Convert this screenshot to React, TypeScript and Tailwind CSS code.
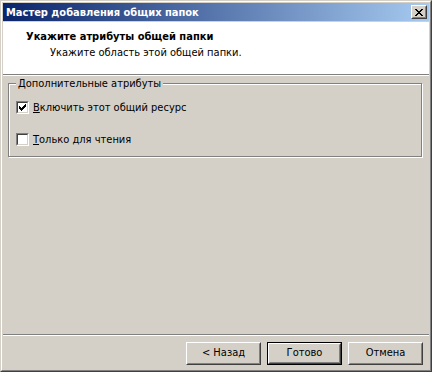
import React from "react";

const font = { fontFamily: '"DejaVu Sans Condensed", "Liberation Sans", Arial, sans-serif' };

function Checkbox({ checked }: { checked: boolean }) {
  return (
    <div className="w-[13px] h-[13px] shrink-0 border border-t-[#808080] border-l-[#808080] border-r-white border-b-white">
      <div className="w-full h-full border border-t-[#404040] border-l-[#404040] border-r-[#d4d0c8] border-b-[#d4d0c8] bg-white flex items-center justify-center">
        {checked && (
          <svg width="7" height="7" viewBox="0 0 7 7" shapeRendering="crispEdges">
            <path d="M0 2h1v3h-1zM1 3h1v3h-1zM2 4h1v3h-1zM3 3h1v3h-1zM4 2h1v3h-1zM5 1h1v3h-1zM6 0h1v3h-1z" fill="#000" />
          </svg>
        )}
      </div>
    </div>
  );
}

function Button({ label, def }: { label: string; def?: boolean }) {
  const inner = (
    <div className="h-full w-full border border-t-white border-l-white border-r-[#404040] border-b-[#404040]">
      <div className="h-full w-full border border-t-[#d4d0c8] border-l-[#d4d0c8] border-r-[#808080] border-b-[#808080] flex items-center justify-center text-[11px] text-black">
        {label}
      </div>
    </div>
  );
  return (
    <div className={"w-[75px] h-[23px] bg-[#d4d0c8] " + (def ? "border border-black" : "")}>
      {inner}
    </div>
  );
}

export default function App() {
  return (
    <div style={font} className="w-[432px] h-[372px] bg-[#d4d0c8] border border-t-[#d4d0c8] border-l-[#d4d0c8] border-r-[#404040] border-b-[#404040]">
      <div className="w-full h-full border border-t-white border-l-white border-r-[#808080] border-b-[#808080] p-[1px] flex flex-col">
        {/* Title bar */}
        <div className="h-[18px] shrink-0 flex items-center bg-[linear-gradient(to_right,#0a246a,#a6caf0)]">
          <span className="pl-[3px] text-[11px] font-bold text-white leading-none">Мастер добавления общих папок</span>
          <div className="ml-auto mr-[2px] w-[16px] h-[14px] bg-[#d4d0c8] border border-t-white border-l-white border-r-[#404040] border-b-[#404040]">
            <div className="w-full h-full border border-t-[#d4d0c8] border-l-[#d4d0c8] border-r-[#808080] border-b-[#808080] flex items-center justify-center">
              <svg width="8" height="7" viewBox="0 0 8 7" shapeRendering="crispEdges">
                <path d="M0 0h2v1h-2zM6 0h2v1h-2zM1 1h2v1h-2zM5 1h2v1h-2zM2 2h4v1h-4zM3 3h2v1h-2zM2 4h4v1h-4zM1 5h2v1h-2zM5 5h2v1h-2zM0 6h2v1h-2zM6 6h2v1h-2z" fill="#000" />
              </svg>
            </div>
          </div>
        </div>
        <div className="h-[1px] shrink-0" />
        {/* Client */}
        <div className="flex-1 flex flex-col">
          <div className="h-[52px] shrink-0 bg-white pl-[23px] pt-[8px] text-[11px] text-black">
            <div className="font-bold leading-[13px]">Укажите атрибуты общей папки</div>
            <div className="pl-[24px] leading-[13px] mt-[3px]">Укажите область этой общей папки.</div>
          </div>
          <div className="h-[1px] bg-[#808080] shrink-0" />
          <div className="h-[1px] bg-white shrink-0" />
          <div className="flex-1 pt-[7px] pl-[5px] pr-[6px]">
            <div className="relative h-[74px] border border-[#808080] shadow-[inset_1px_1px_0_#fff,1px_1px_0_#fff] mr-[1px] mb-[1px]">
              <span className="absolute left-[7px] -top-[7px] px-[2px] bg-[#d4d0c8] text-[11px] leading-[13px] text-black">
                Дополнительные атрибуты
              </span>
              <div className="pt-[17px] pl-[7px] flex flex-col gap-[19px] text-[11px] text-black">
                <div className="flex items-center gap-[4px] h-[13px]">
                  <Checkbox checked />
                  <span className="leading-[13px]"><span className="underline">В</span>ключить этот общий ресурс</span>
                </div>
                <div className="flex items-center gap-[4px] h-[13px]">
                  <Checkbox checked={false} />
                  <span className="leading-[13px]"><span className="underline">Т</span>олько для чтения</span>
                </div>
              </div>
            </div>
          </div>
          <div className="h-[1px] bg-[#808080] shrink-0" />
          <div className="h-[1px] bg-white shrink-0" />
          <div className="h-[33px] shrink-0 pt-[6px] pr-[6px] flex justify-end gap-[6px]">
            <Button label="< Назад" />
            <Button label="Готово" def />
            <Button label="Отмена" />
          </div>
        </div>
      </div>
    </div>
  );
}
